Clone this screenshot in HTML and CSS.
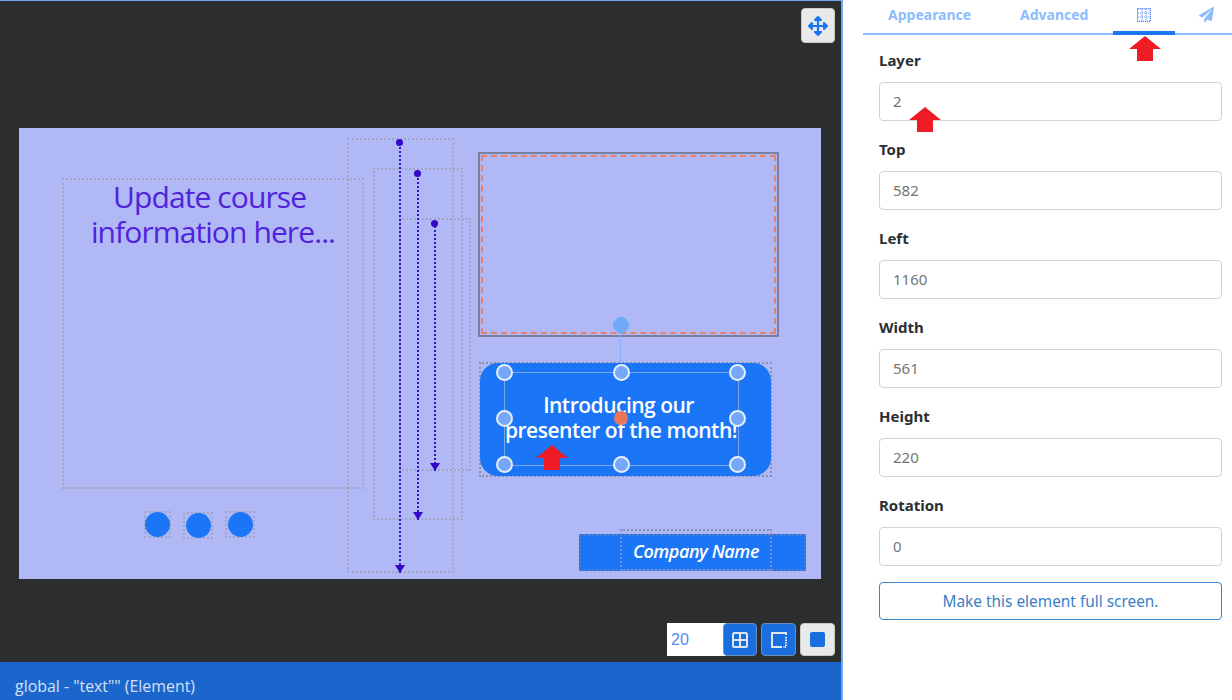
FILE: index.html
```html
<!DOCTYPE html>
<html lang="en">
<head>
    <meta charset="UTF-8">
    <title>Slide Editor</title>
    <link rel="stylesheet" href="styles.css">
</head>
<body>

    <!-- Editor -->
    <main class="editor">
        <div class="workspace">
            <button class="tool tool-move">
                <svg width="20" height="20" viewBox="0 0 512 512"><path fill="#1a76f0" d="M352.201 425.775l-79.196 79.196c-9.373 9.373-24.568 9.373-33.941 0l-79.196-79.196c-15.119-15.119-4.411-40.971 16.971-40.97h51.162L228 284H127.196v51.162c0 21.382-25.851 32.09-40.971 16.971L7.029 272.937c-9.373-9.373-9.373-24.569 0-33.941L86.225 159.8c15.119-15.119 40.971-4.411 40.971 16.971V228H228V127.196h-51.23c-21.382 0-32.09-25.851-16.971-40.971l79.196-79.196c9.373-9.373 24.568-9.373 33.941 0l79.196 79.196c15.119 15.119 4.411 40.971-16.971 40.971h-51.162V228h100.804v-51.162c0-21.382 25.851-32.09 40.97-16.971l79.196 79.196c9.373 9.373 9.373 24.569 0 33.941L425.773 352.2c-15.119 15.119-40.971 4.411-40.97-16.971V284H284v100.804h51.23c21.382 0 32.09 25.851 16.971 40.971z"/></svg>
            </button>

            <!-- Slide -->
            <div class="slide">
                <div class="outline title-box">
                    <p class="title-text">Update course&nbsp;<br>information here...</p>
                </div>

                <div class="outline line-box line-box-1"></div>
                <div class="outline line-box line-box-2"></div>
                <div class="outline line-box line-box-3"></div>

                <div class="drop-line drop-line-1"></div>
                <div class="drop-line drop-line-2"></div>
                <div class="drop-line drop-line-3"></div>

                <div class="picture"><div class="picture-inner"></div></div>

                <div class="outline card">
                    <div class="card-fill">
                        <p class="card-text">Introducing our&nbsp;<br>presenter of the month!</p>
                    </div>
                </div>

                <div class="rotate-line"></div>
                <div class="rotate-handle"></div>
                <div class="selection">
                    <span class="handle h-tl"></span>
                    <span class="handle h-tc"></span>
                    <span class="handle h-tr"></span>
                    <span class="handle h-ml"></span>
                    <span class="handle h-mr"></span>
                    <span class="handle h-bl"></span>
                    <span class="handle h-bc"></span>
                    <span class="handle h-br"></span>
                </div>
                <div class="center-dot"></div>

                <svg class="red-arrow arrow-card" viewBox="0 0 32 25"><polygon points="16,0 32,13 24,13 24,25 8,25 8,13 0,13"/></svg>

                <div class="outline company"></div>
                <div class="outline company-text">Company Name</div>

                <div class="outline dot dot-1"><span></span></div>
                <div class="outline dot dot-2"><span></span></div>
                <div class="outline dot dot-3"><span></span></div>
            </div>

            <!-- Zoom and grid tools -->
            <div class="tools">
                <div class="grid-size">20</div>
                <button class="tool tool-blue tool-grid">
                    <svg width="16" height="16" viewBox="0 0 16 16"><rect x="1" y="1" width="14" height="14" rx="1.5" fill="none" stroke="#dfe6f2" stroke-width="2"/><path d="M8 1v14M1 8h14" stroke="#dfe6f2" stroke-width="2"/></svg>
                </button>
                <button class="tool tool-blue tool-snap">
                    <svg width="16" height="16" viewBox="0 0 16 16"><path d="M15 3V1H1v14h10" fill="none" stroke="#dfe6f2" stroke-width="2"/><path d="M15 5v10h-3" fill="none" stroke="#dfe6f2" stroke-width="2" stroke-dasharray="1.5 1"/></svg>
                </button>
                <button class="tool tool-stop"><span class="stop-square"></span></button>
            </div>
        </div>
        <div class="status-bar">global - "text"" (Element)</div>
    </main>

    <!-- Properties panel -->
    <aside class="panel">
        <nav class="tabs">
            <a href="#" class="tab tab-appearance">Appearance</a>
            <a href="#" class="tab tab-advanced">Advanced</a>
            <a href="#" class="tab tab-layout">
                <svg width="14" height="14" viewBox="0 0 14 14"><rect x="0.6" y="0.6" width="12.8" height="12.8" fill="none" stroke="#4a7cf0" stroke-width="1.2" stroke-dasharray="1.2 0.8"/><path d="M5 1v12M9 1v12M1 5h12M1 9h12" stroke="#7fa3f4" stroke-width="1.2" stroke-dasharray="1.2 0.8"/></svg>
            </a>
            <a href="#" class="tab tab-send">
                <svg width="15" height="15" viewBox="0 0 512 512"><path fill="#8dbcfb" d="M476 3.2L12.5 270.6c-18.1 10.4-15.8 35.6 2.2 43.2L121 358.4l287.3-253.2c5.5-4.9 13.3 2.6 8.6 8.3L176 407v80.5c0 23.6 28.5 32.9 42.5 15.8L282 426l124.6 52.2c14.2 6 30.4-2.9 33-18.2l72-432C515 7.8 493.3-6.8 476 3.2z"/></svg>
            </a>
        </nav>

        <form class="fields">
            <div class="field">
                <label>Layer</label>
                <div class="input">2</div>
            </div>
            <div class="field">
                <label>Top</label>
                <div class="input">582</div>
            </div>
            <div class="field">
                <label>Left</label>
                <div class="input">1160</div>
            </div>
            <div class="field">
                <label>Width</label>
                <div class="input">561</div>
            </div>
            <div class="field">
                <label>Height</label>
                <div class="input">220</div>
            </div>
            <div class="field">
                <label>Rotation</label>
                <div class="input">0</div>
            </div>
            <button type="button" class="full-screen">Make this element full screen.</button>
        </form>

        <svg class="red-arrow arrow-tab" viewBox="0 0 32 25"><polygon points="16,0 32,13 24,13 24,25 8,25 8,13 0,13"/></svg>
        <svg class="red-arrow arrow-layer" viewBox="0 0 32 25"><polygon points="16,0 32,13 24,13 24,25 8,25 8,13 0,13"/></svg>
    </aside>

</body>
</html>
```

FILE: styles.css
```css
/* General Body Style */
* {
    box-sizing: border-box;
}

body {
    margin: 0;
    width: 1232px;
    height: 700px;
    display: flex;
    overflow: hidden;
    font-family: 'Open Sans', sans-serif;
    background-color: #ffffff;
}

/* Editor */
.editor {
    width: 843px;
    display: flex;
    flex-direction: column;
    border-top: 1px solid #6fa8f0;
    border-right: 2px solid #6fa8f0;
}

.workspace {
    flex: 1;
    position: relative;
    background-color: #2c2d2f;
}

.status-bar {
    height: 38px;
    padding-left: 15px;
    line-height: 49px;
    font-size: 15.9px;
    color: #d3e0f5;
    background-color: #1b66cc;
    overflow: hidden;
}

/* Tool Buttons */
.tool {
    position: absolute;
    display: flex;
    align-items: center;
    justify-content: center;
    padding: 0;
    border: 1px solid #c9c9c9;
    border-radius: 4px;
    background-color: #e9e9e9;
}

.tool-move {
    left: 801px;
    top: 7px;
    width: 34px;
    height: 35px;
}

.tools .tool-blue {
    background-color: #1a6fe0;
    border-color: #6c8fc0;
}

.grid-size {
    position: absolute;
    left: 667px;
    top: 622px;
    width: 60px;
    height: 33px;
    padding-left: 4px;
    line-height: 33px;
    font-family: 'Liberation Sans', sans-serif;
    font-size: 16px;
    color: #4f8df7;
    background-color: #ffffff;
}

.tool-grid {
    left: 723px;
    top: 622px;
    width: 34px;
    height: 33px;
}

.tool-snap {
    left: 761px;
    top: 622px;
    width: 35px;
    height: 33px;
}

.tool-stop {
    left: 800px;
    top: 622px;
    width: 35px;
    height: 33px;
}

.stop-square {
    width: 15px;
    height: 15px;
    border-radius: 2px;
    background-color: #1a6fe0;
}

/* Slide Canvas */
.slide {
    position: absolute;
    left: 19px;
    top: 127px;
    width: 802px;
    height: 451px;
    background-color: #b0b8f6;
}

.outline {
    position: absolute;
    border: 2px dotted #a2a5c4;
}

.title-box {
    left: 43px;
    top: 50px;
    width: 302px;
    height: 311px;
}

.title-text {
    margin: -1px 0 0;
    text-align: center;
    font-size: 30px;
    letter-spacing: -0.9px;
    line-height: 35px;
    color: #5022dc;
}

.line-box-1 {
    left: 328px;
    top: 10px;
    width: 107px;
    height: 435px;
}

.line-box-2 {
    left: 354px;
    top: 40px;
    width: 90px;
    height: 352px;
}

.line-box-3 {
    left: 380px;
    top: 90px;
    width: 72px;
    height: 253px;
}

/* Dotted Arrows */
.drop-line {
    position: absolute;
    width: 2px;
    border-left: 2px dotted #3a12cc;
}

.drop-line::before {
    content: "";
    position: absolute;
    left: -5px;
    top: -3px;
    width: 7px;
    height: 7px;
    border-radius: 50%;
    background-color: #3306cc;
}

.drop-line::after {
    content: "";
    position: absolute;
    left: -6px;
    bottom: 0;
    border-left: 5px solid transparent;
    border-right: 5px solid transparent;
    border-top: 8px solid #3306cc;
}

.drop-line-1 {
    left: 380px;
    top: 14px;
    height: 431px;
}

.drop-line-2 {
    left: 398px;
    top: 45px;
    height: 347px;
}

.drop-line-3 {
    left: 415px;
    top: 95px;
    height: 248px;
}

/* Picture Placeholder */
.picture {
    position: absolute;
    left: 459px;
    top: 24px;
    width: 301px;
    height: 185px;
    padding: 1px;
    border: 2px solid #7b7f9f;
}

.picture-inner {
    height: 100%;
    border: 2px dashed #e8806a;
}

/* Blue Card */
.card {
    left: 460px;
    top: 234px;
    width: 293px;
    height: 115px;
    border-color: #8c90b0;
}

.card-fill {
    height: calc(100% + 2px);
    margin: -1px;
    overflow: hidden;
    border-radius: 18px;
    background-color: #1a76f7;
}

.card-text {
    margin: 30px 0 0;
    padding-right: 9px;
    text-align: center;
    font-size: 21px;
    font-weight: 600;
    letter-spacing: -0.5px;
    line-height: 25px;
    color: #ffffff;
}

/* Selection Handles */
.selection {
    position: absolute;
    left: 485px;
    top: 244px;
    width: 235px;
    height: 94px;
    border: 1px solid #7ba6ec;
}

.handle {
    position: absolute;
    width: 17px;
    height: 17px;
    margin: -9px 0 0 -9px;
    border: 2px solid #e6eefc;
    border-radius: 50%;
    background-color: #75a8fb;
}

.h-tl { left: 0; top: 0; }
.h-tc { left: 50%; top: 0; }
.h-tr { left: 100%; top: 0; }
.h-ml { left: 0; top: 50%; }
.h-mr { left: 100%; top: 50%; }
.h-bl { left: 0; top: 100%; }
.h-bc { left: 50%; top: 100%; }
.h-br { left: 100%; top: 100%; }

.rotate-line {
    position: absolute;
    left: 601px;
    top: 205px;
    width: 1px;
    height: 30px;
    background-color: #82b0f8;
}

.rotate-handle {
    position: absolute;
    left: 594px;
    top: 189px;
    width: 16px;
    height: 16px;
    border: 1px solid #5fb2ff;
    border-radius: 50%;
    background-color: #72a8f6;
}

.center-dot {
    position: absolute;
    left: 595px;
    top: 283px;
    width: 14px;
    height: 14px;
    border-radius: 50%;
    background-color: #e8775c;
}

/* Company Name Bar */
.company {
    left: 560px;
    top: 406px;
    width: 227px;
    height: 37px;
    background-color: #1a76f7;
    border-color: #5a78c0;
}

.company-text {
    left: 601px;
    top: 401px;
    width: 152px;
    height: 42px;
    padding-top: 8px;
    text-align: center;
    font-size: 18px;
    font-weight: 600;
    font-style: italic;
    letter-spacing: -0.45px;
    color: #ffffff;
    border-color: #7f8cc0;
}

/* Round Dots */
.dot {
    display: flex;
    align-items: center;
    justify-content: center;
}

.dot span {
    width: 25px;
    height: 25px;
    flex-shrink: 0;
    border-radius: 50%;
    background-color: #1a76f7;
}

.dot-1 {
    left: 125px;
    top: 383px;
    width: 27px;
    height: 27px;
}

.dot-2 {
    left: 164px;
    top: 384px;
    width: 30px;
    height: 27px;
}

.dot-3 {
    left: 206px;
    top: 383px;
    width: 30px;
    height: 27px;
}

/* Red Pointer Arrows */
.red-arrow {
    position: absolute;
    width: 32px;
    height: 25px;
    fill: #ee1c25;
}

.arrow-card {
    left: 517px;
    top: 317px;
}

.arrow-tab {
    left: 1129px;
    top: 36px;
}

.arrow-layer {
    left: 909px;
    top: 107px;
}

/* Properties Panel */
.panel {
    flex: 1;
    padding-left: 20px;
    font-family: 'Noto Sans', sans-serif;
    background-color: #ffffff;
}

.tabs {
    position: relative;
    height: 35px;
    border-bottom: 2px solid #8cbcfb;
}

.tab {
    position: absolute;
    top: 5px;
    font-size: 14px;
    font-weight: 700;
    line-height: 20px;
    color: #8dbcfb;
    text-decoration: none;
}

.tab-appearance {
    left: 25px;
}

.tab-advanced {
    left: 157px;
}

.tab-layout {
    left: 250px;
    top: 0;
    width: 62px;
    height: 35px;
    padding-top: 7px;
    text-align: center;
    border-bottom: 4px solid #1a76f0;
}

.tab-send {
    left: 336px;
    top: 7px;
}

/* Form Fields */
.fields {
    padding: 14px 10px 0 16px;
}

.field {
    height: 89px;
}

.field label {
    display: block;
    height: 33px;
    font-size: 15px;
    font-weight: 700;
    line-height: 22px;
    color: #2b2f33;
}

.input {
    height: 39px;
    padding-left: 13px;
    border: 1px solid #ced4da;
    border-radius: 4px;
    font-size: 15px;
    line-height: 37px;
    color: #757575;
    background-color: #ffffff;
}

.full-screen {
    display: block;
    width: 100%;
    height: 38px;
    margin-top: -1px;
    border: 1px solid #3a87c8;
    border-radius: 4px;
    font-family: inherit;
    font-size: 15.4px;
    color: #3a80c4;
    background-color: #ffffff;
}
```
